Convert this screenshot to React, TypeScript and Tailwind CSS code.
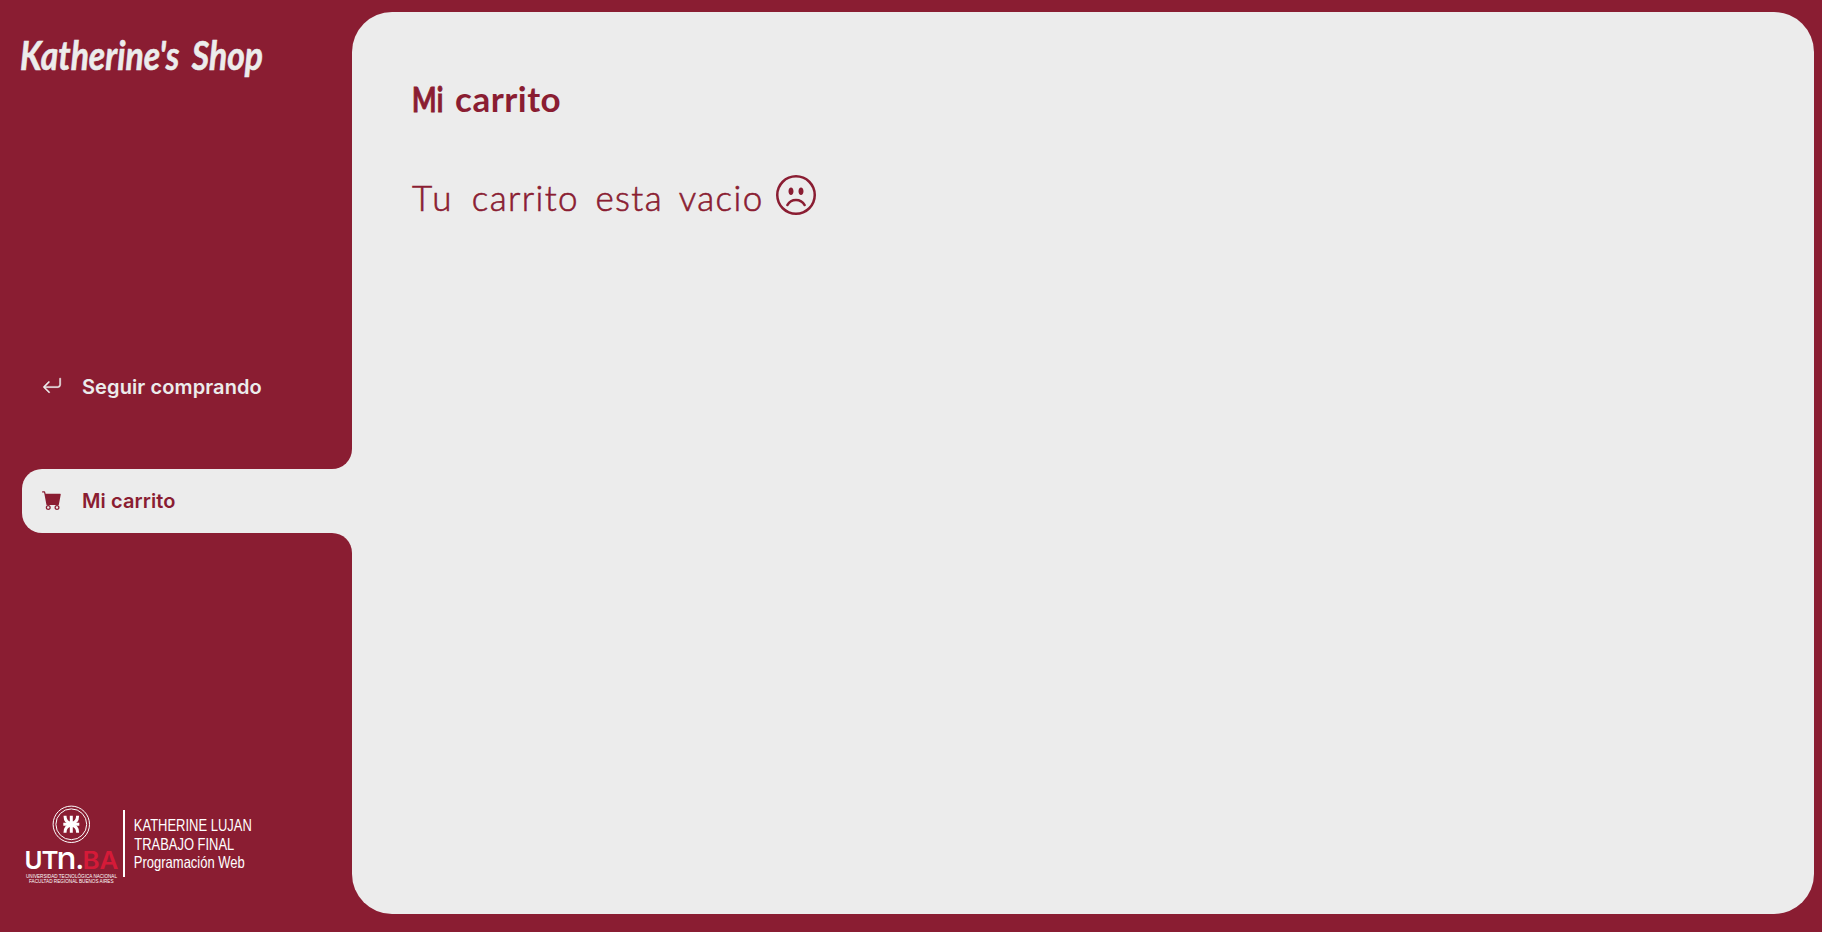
import { BsArrowReturnLeft, BsCartFill, BsEmojiFrown } from "react-icons/bs";

function ShopLogo() {
  return (
    <svg
      className="block h-20 w-[300px] overflow-visible fill-[#ececec] stroke-[#ececec] font-['Lato'] font-bold italic [word-spacing:6px]"
      viewBox="0 0 300 80"
      role="img"
      aria-label="Katherine's Shop"
    >
      <text x="20" y="50" fontSize="40" strokeWidth="0.6" textLength="243" lengthAdjust="spacingAndGlyphs">
        Katherine's Shop
      </text>
    </svg>
  );
}

function UniversityLogo() {
  return (
    <svg
      className="block h-[100px] w-[280px] overflow-visible fill-white font-['Liberation_Sans']"
      viewBox="0 795 280 100"
      role="img"
      aria-label="UTN.BA"
    >
      <g fill="none" stroke="#fff">
        <circle cx="71.3" cy="824.3" r="18.2" strokeWidth="1" />
        <circle cx="71.3" cy="824.3" r="15.4" strokeWidth="1" />
        <path d="M71.3 815.8v17M63.3 824.3h16" strokeWidth="3" />
        <path
          d="M65 815.800c0 5 2.500 7.300 6.300 7.300s6.300-2.300 6.300-7.300M65 832.800c0-5 2.500-7.300 6.300-7.300s6.300 2.300 6.300 7.300"
          strokeWidth="3"
        />
      </g>
      <g className="font-['Inter'] font-semibold">
        <text x="24.500" y="868.500" fontSize="24" textLength="18" lengthAdjust="spacingAndGlyphs">U</text>
        <text x="41.500" y="868.500" fontSize="24" textLength="17" lengthAdjust="spacingAndGlyphs">T</text>
        <text x="56.500" y="868.500" fontSize="31" className="font-medium" textLength="20" lengthAdjust="spacingAndGlyphs">n</text>
        <text x="75.500" y="868.500" fontSize="27">.</text>
        <text x="82.500" y="868.500" fontSize="24" fill="#d51a38" textLength="36" lengthAdjust="spacingAndGlyphs">BA</text>
      </g>
      <text x="26" y="877.500" fontSize="5.500" textLength="91" lengthAdjust="spacingAndGlyphs">
        UNIVERSIDAD TECNOLÓGICA NACIONAL
      </text>
      <text x="29" y="883" fontSize="5.200" textLength="84.500" lengthAdjust="spacingAndGlyphs">
        FACULTAD REGIONAL BUENOS AIRES
      </text>
      <rect x="123" y="810" width="2" height="67" />
      <g fontSize="16.500">
        <text x="133.800" y="830.700" textLength="118" lengthAdjust="spacingAndGlyphs">KATHERINE LUJAN</text>
        <text x="134.300" y="849.700" textLength="100" lengthAdjust="spacingAndGlyphs">TRABAJO FINAL</text>
        <text x="133.800" y="868.300" textLength="111" lengthAdjust="spacingAndGlyphs">Programación Web</text>
      </g>
    </svg>
  );
}

export default function App() {
  return (
    <div className="flex h-[932px] w-full overflow-hidden bg-[#8a1d32] pt-3 pr-2 pb-[18px]">
      <aside className="flex w-[352px] shrink-0 flex-col">
        <div className="mt-2">
          <ShopLogo />
        </div>
        <nav className="mt-[255px] flex flex-col pl-[22px] font-['Inter'] text-[20px] font-semibold">
          <a className="flex h-16 items-center pl-5 text-[#ececec]">
            <BsArrowReturnLeft size={20} className="mb-[3px]" strokeWidth={0.3} />
            <span className="ml-5 whitespace-nowrap tracking-[0.1px]">Seguir comprando</span>
          </a>
          <div className="mt-[30px] flex h-5 justify-end bg-[#ececec] [clip-path:inset(0_0_0_310px)]">
            <div className="w-full rounded-br-[20px] bg-[#8a1d32]" />
          </div>
          <a className="flex h-16 items-center rounded-l-[20px] bg-[#ececec] pl-5 text-[#8a1d32]">
            <BsCartFill size={20} className="mb-0.5" />
            <span className="ml-5 whitespace-nowrap tracking-[0.1px]">Mi carrito</span>
          </a>
          <div className="flex h-5 bg-[#ececec] [clip-path:inset(0_0_0_310px)]">
            <div className="w-full rounded-tr-[20px] bg-[#8a1d32]" />
          </div>
        </nav>
        <div className="mt-auto mb-[19px]">
          <UniversityLogo />
        </div>
      </aside>
      <main className="flex flex-1 flex-col rounded-[40px] bg-[#ececec] pt-[62px] pl-[60px] font-['Lato'] text-[35px] leading-[48px] text-[#8a1d32]">
        <h1 className="flex font-bold tracking-[0.5px]">
          <span className="w-[42px] origin-left scale-x-[0.74] [-webkit-text-stroke:0.9px_#8a1d32]">Mi</span>
          <span>&nbsp;</span>
          <span className="-ml-2">carrito</span>
        </h1>
        <div className="mt-[51px] flex items-center font-light">
          <p className="whitespace-nowrap [-webkit-text-stroke:0.6px_#8a1d32] [word-spacing:5.5px]">
            <span className="tracking-[4px]">Tu</span>
            <span className="tracking-[1.4px]"> carrito esta vacio</span>
          </p>
          <BsEmojiFrown size={40} className="mb-1 ml-3" />
        </div>
      </main>
    </div>
  );
}
